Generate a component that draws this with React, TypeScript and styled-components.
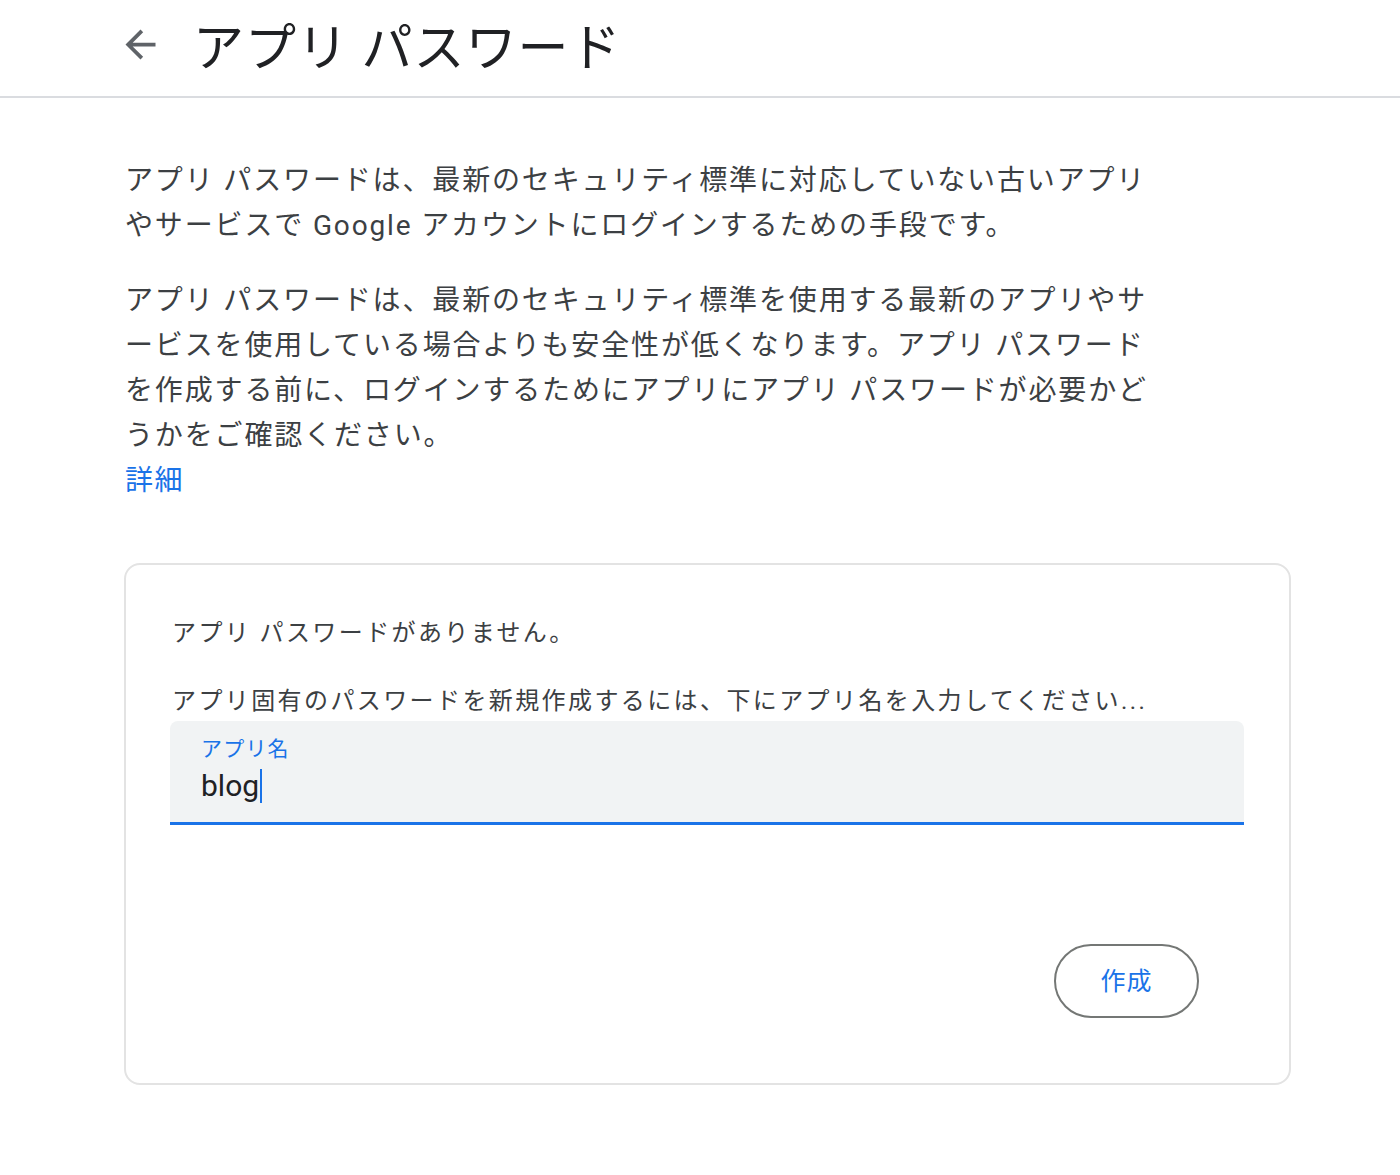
import React from "react";
import styled, { createGlobalStyle } from "styled-components";

const GlobalStyle = createGlobalStyle`
  html, body {
    margin: 0;
    padding: 0;
    background: #ffffff;
  }
  body {
    font-family: Roboto, "Noto Sans CJK JP", "Noto Sans", sans-serif;
    color: #3c4043;
    -webkit-font-smoothing: antialiased;
  }
  * { box-sizing: border-box; }
`;

const Page = styled.div`
  width: 1400px;
  min-height: 1175px;
  background: #fff;
`;

const Header = styled.header`
  height: 98px;
  display: flex;
  align-items: center;
  padding-left: 118px;
  padding-bottom: 8px;
  border-bottom: 2px solid #dadce0;
  gap: 30px;
`;

const BackButton = styled.button`
  width: 45px;
  height: 45px;
  padding: 0;
  border: none;
  background: transparent;
  display: flex;
  align-items: center;
  justify-content: center;
  color: #5f6368;
  cursor: pointer;
`;

const Title = styled.h1`
  margin: 0;
  font-family: "Noto Sans CJK JP", sans-serif;
  font-weight: 400;
  font-size: 51px;
  line-height: 60px;
  color: #202124;
  letter-spacing: 1px;
`;

const Main = styled.main`
  padding: 60px 109px 0 124px;
`;

const Paragraph = styled.p<{ $gap?: number }>`
  margin: 0 0 ${(p) => p.$gap ?? 0}px 0;
  max-width: 1040px;
  font-size: 28px;
  line-height: 45px;
  letter-spacing: 1.85px;
  color: #3c4043;
  line-break: loose;
  padding-left: 1px;
`;

const Link = styled.a`
  display: block;
  font-size: 28px;
  line-height: 45px;
  letter-spacing: 1.6px;
  color: #1a73e8;
  text-decoration: none;
  padding-left: 1px;
`;

const Card = styled.section`
  margin-top: 60px;
  width: 1167px;
  border: 2px solid #e3e3e3;
  border-radius: 16px;
  padding: 50px 45px 65px 44px;
`;

const CardText = styled.p<{ $gap?: number }>`
  margin: 0 0 ${(p) => p.$gap ?? 0}px 0;
  font-size: 24px;
  line-height: 36px;
  letter-spacing: 2.4px;
  color: #3c4043;
  padding-left: 2px;
`;

const Field = styled.div`
  margin-top: 2px;
  height: 104px;
  background: #f1f3f4;
  border-radius: 8px 8px 0 0;
  border-bottom: 3px solid #1a73e8;
  padding: 14px 31px 0;
  display: flex;
  flex-direction: column;
`;

const FieldLabel = styled.label`
  font-size: 21px;
  line-height: 28px;
  letter-spacing: 1.2px;
  color: #1a73e8;
`;

const FieldValue = styled.div`
  margin-top: 5px;
  display: flex;
  align-items: center;
  font-family: Roboto, sans-serif;
  font-size: 30px;
  line-height: 36px;
  color: #202124;
`;

const Caret = styled.span`
  display: inline-block;
  width: 2px;
  height: 34px;
  margin-left: 1px;
  background: #1a73e8;
`;

const Actions = styled.div`
  margin-top: 119px;
  display: flex;
  justify-content: flex-end;
  padding-right: 45px;
`;

const OutlineButton = styled.button`
  width: 145px;
  height: 74px;
  border: 2px solid #747775;
  border-radius: 37px;
  background: #fff;
  color: #1a73e8;
  font-family: "Noto Sans CJK JP", sans-serif;
  font-size: 25px;
  letter-spacing: 1px;
  padding: 0 0 5px;
  cursor: pointer;
`;

const ArrowBack = () => (
  <svg width="45" height="45" viewBox="0 0 24 24" fill="currentColor" aria-hidden="true">
    <path d="M20 11H7.83l5.59-5.59L12 4l-8 8 8 8 1.41-1.41L7.83 13H20v-2z" />
  </svg>
);

export default function App() {
  return (
    <>
      <GlobalStyle />
      <Page>
        <Header>
          <BackButton aria-label="戻る">
            <ArrowBack />
          </BackButton>
          <Title>アプリ パスワード</Title>
        </Header>
        <Main>
          <Paragraph $gap={30}>
            アプリ パスワードは、最新のセキュリティ標準に対応していない古いアプリやサービスで Google アカウントにログインするための手段です。
          </Paragraph>
          <Paragraph>
            アプリ パスワードは、最新のセキュリティ標準を使用する最新のアプリやサービスを使用している場合よりも安全性が低くなります。アプリ パスワードを作成する前に、ログインするためにアプリにアプリ パスワードが必要かどうかをご確認ください。
          </Paragraph>
          <Link href="#">詳細</Link>
          <Card>
            <CardText $gap={32}>アプリ パスワードがありません。</CardText>
            <CardText>アプリ固有のパスワードを新規作成するには、下にアプリ名を入力してください...</CardText>
            <Field>
              <FieldLabel>アプリ名</FieldLabel>
              <FieldValue>
                blog
                <Caret />
              </FieldValue>
            </Field>
            <Actions>
              <OutlineButton>作成</OutlineButton>
            </Actions>
          </Card>
        </Main>
      </Page>
    </>
  );
}
